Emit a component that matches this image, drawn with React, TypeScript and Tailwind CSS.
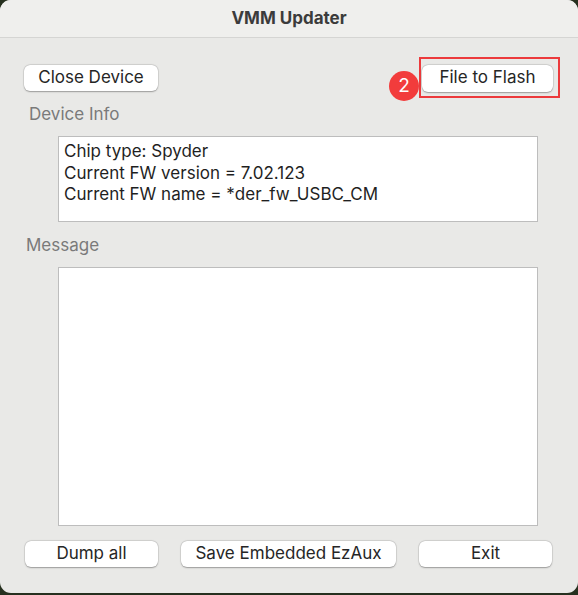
const font = { fontFamily: "Inter, 'Noto Sans', sans-serif" };

const MacButton = ({ label, className = "" }: { label: string; className?: string }) => (
  <button
    className={`h-[26px] rounded-[6px] bg-white text-[17px] text-[#262626] shadow-[0_0.5px_1.5px_rgba(0,0,0,0.3)] ring-[0.5px] ring-black/10 ${className}`}
  >
    {label}
  </button>
);

export default function App() {
  return (
    <div className="w-[578px] h-[595px] bg-[#26301f]" style={font}>
      <div className="w-[578px] h-[593px] rounded-[11px] bg-[#e9e9e7] overflow-hidden flex flex-col">
        {/* title bar */}
        <div className="h-[38px] shrink-0 bg-[#efefed] border-b border-[#d5d5d3] flex items-center justify-center">
          <span className="text-[17px] font-bold text-[#3b3b3b]">VMM Updater</span>
        </div>

        {/* top row */}
        <div className="flex items-center justify-between pl-[24px] pr-[18px] mt-[19px]">
          <MacButton label="Close Device" className="w-[134px]" />
          <div className="flex">
            <div className="w-[30px] h-[30px] rounded-full bg-[#f23c3c] text-white text-[19px] flex items-center justify-center self-start mt-[14px] -mb-[3px] z-10">
              2
            </div>
            <div className="w-[141px] h-[41px] border-[2px] border-[#ec3a3c] flex items-center justify-center">
              <MacButton label="File to Flash" className="w-[131px] h-[27px] -ml-[4px] mt-[1px]" />
            </div>
          </div>
        </div>

        <div className="pl-[29px] mt-[6px] text-[17px] text-[#7a7a7a] leading-[20px]">Device Info</div>
        <div className="ml-[58px] mt-[12px] w-[480px] h-[86px] bg-white border border-[#bdbdbd] px-[5px] pt-[4px] text-[17px] leading-[21.5px] text-[#1f1f1f]">
          <div>Chip type: Spyder</div>
          <div>Current FW version = 7.02.123</div>
          <div>Current FW name = *der_fw_USBC_CM</div>
        </div>

        <div className="pl-[26px] mt-[13px] text-[17px] text-[#7a7a7a] leading-[20px]">Message</div>
        <div className="ml-[58px] mt-[12px] w-[480px] h-[259px] bg-white border border-[#bdbdbd]" />

        <div className="flex items-center pl-[25px] mt-[15px]">
          <MacButton label="Dump all" className="w-[133px]" />
          <MacButton label="Save Embedded EzAux" className="w-[215px] ml-[23px]" />
          <MacButton label="Exit" className="w-[133px] ml-[23px]" />
        </div>
      </div>
    </div>
  );
}
